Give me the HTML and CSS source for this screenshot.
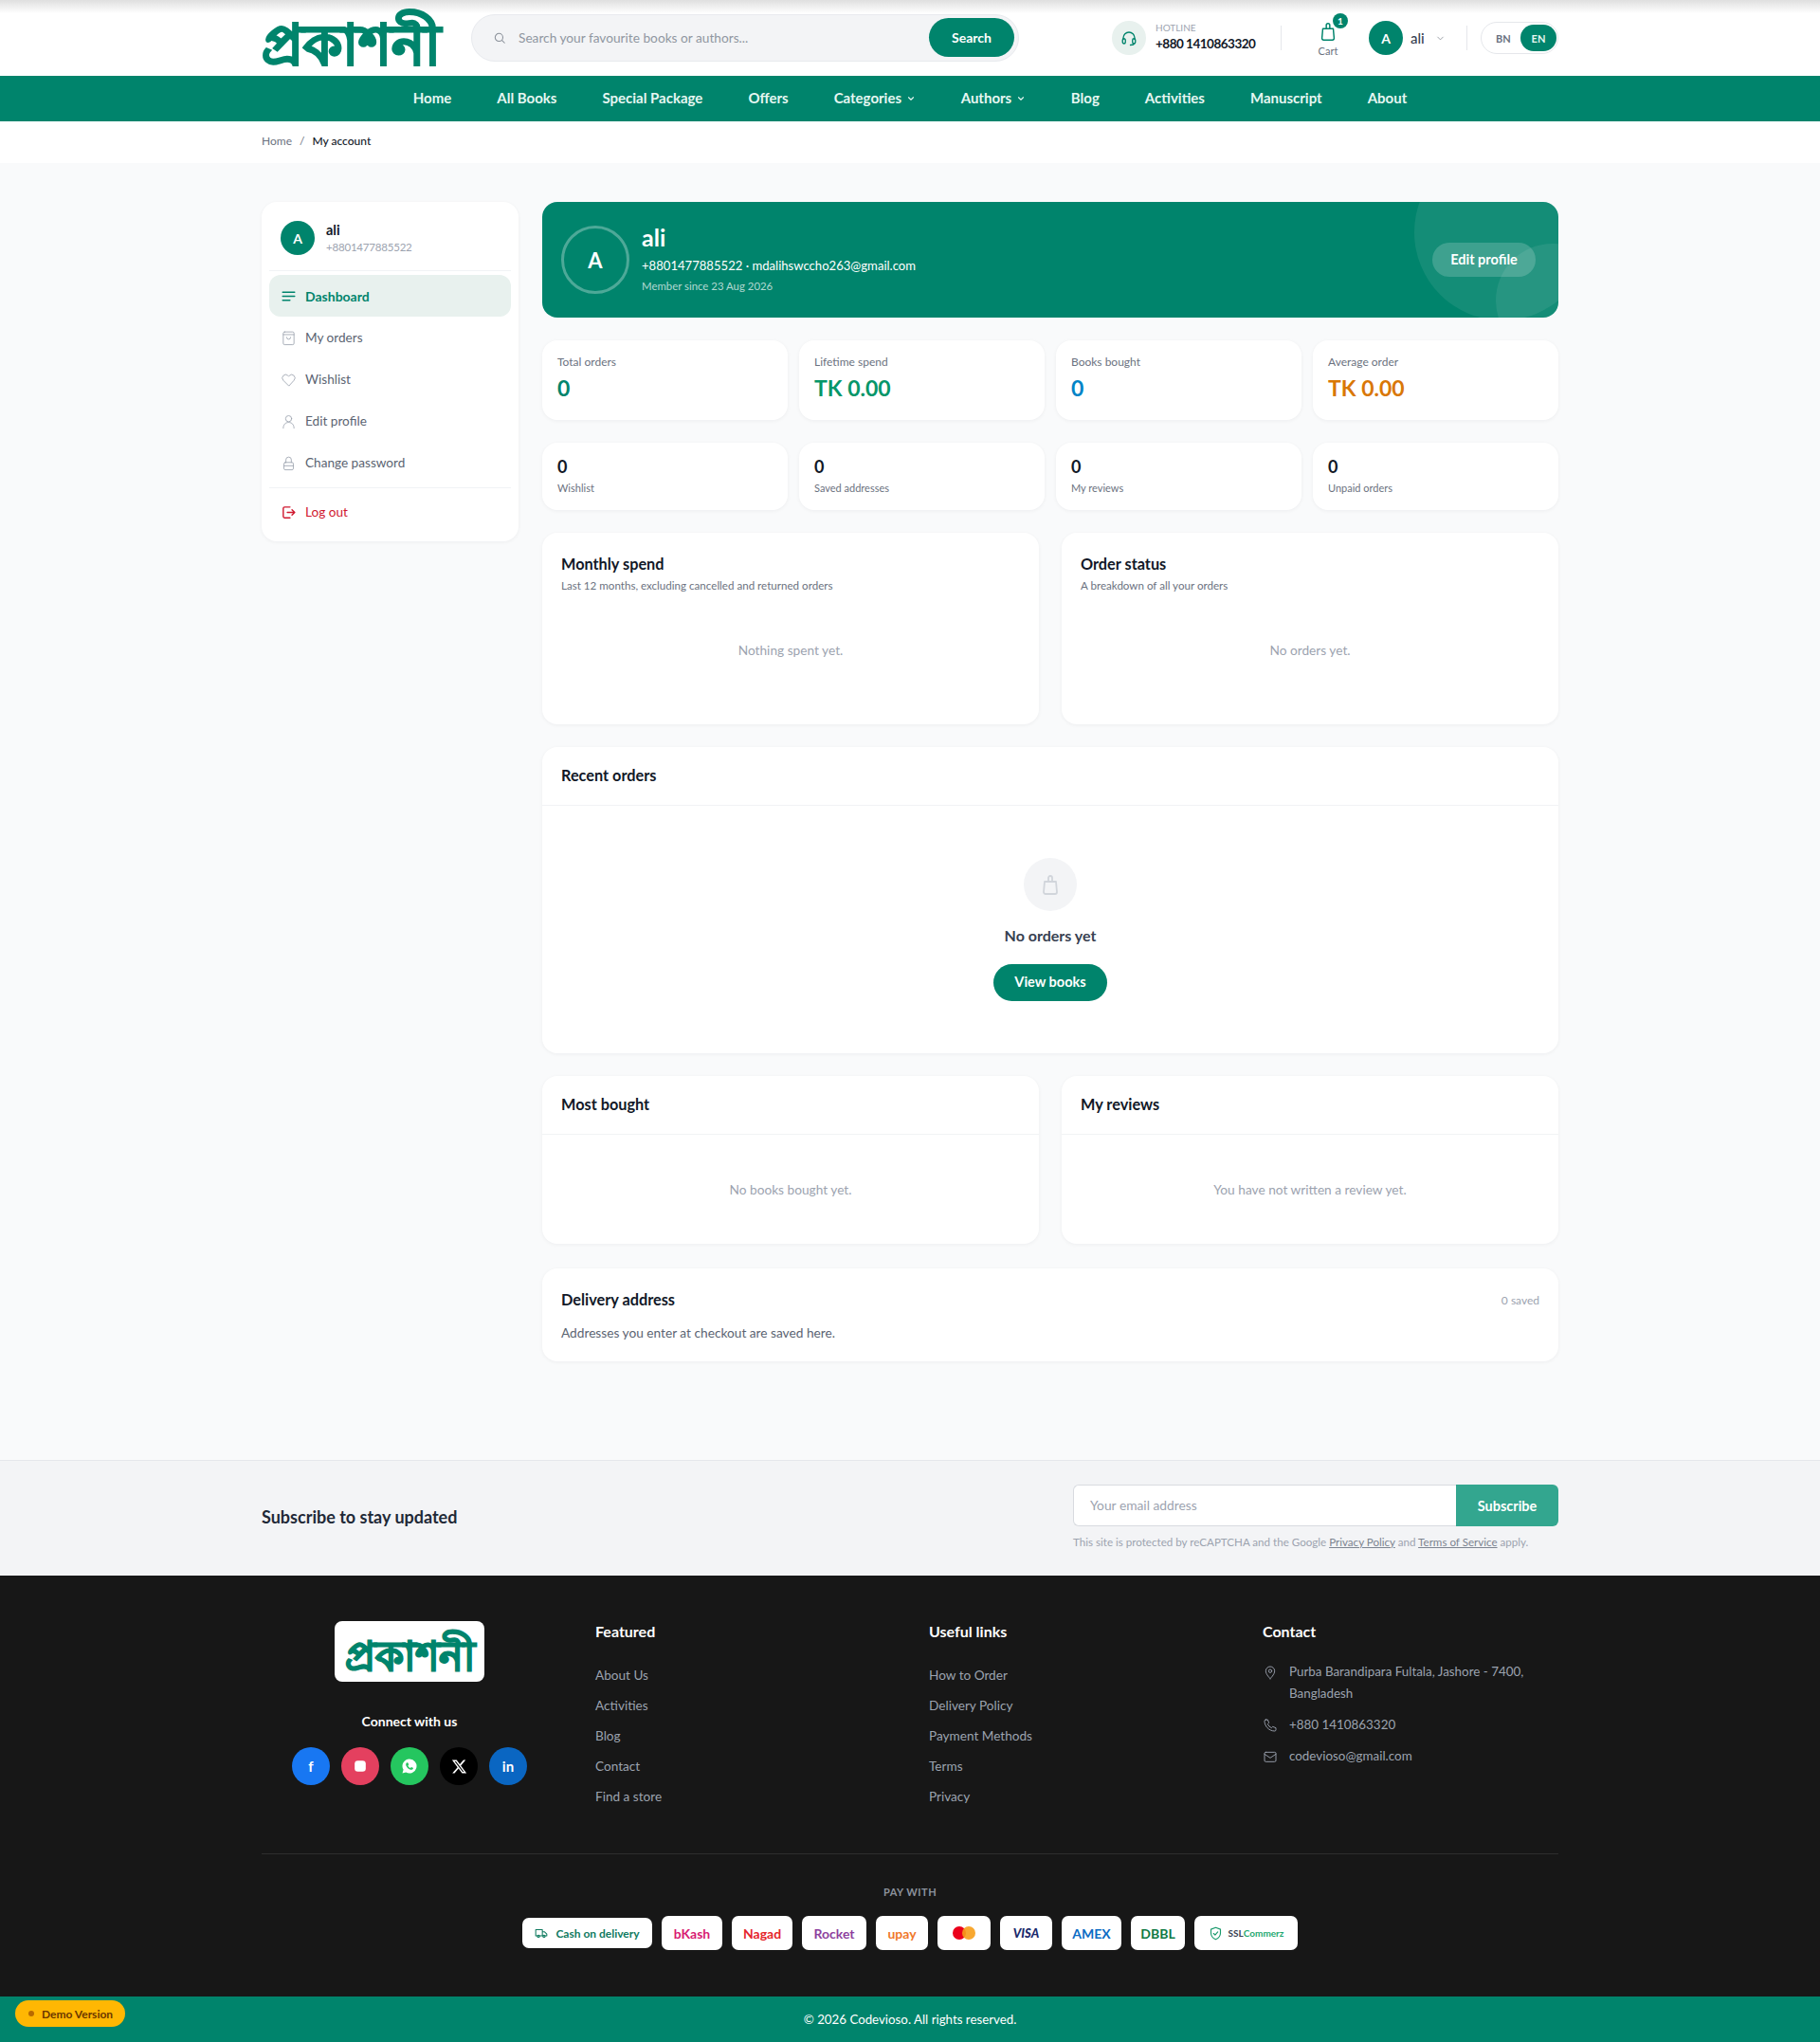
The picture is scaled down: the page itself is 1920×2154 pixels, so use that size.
FILE: index.html
```html
<!DOCTYPE html>
<html lang="en">
<head>
    <meta charset="UTF-8">
    <meta name="viewport" content="width=device-width, initial-scale=1.0">
    <title>My account</title>
    <link rel="stylesheet" href="styles.css">
</head>
<body>
    <header class="site-header">
        <div class="container header-row">
            <a class="logo" href="#" lang="bn">প্রকাশনী</a>
            <form class="search">
                <svg class="search-icon" viewBox="0 0 24 24"><circle cx="11" cy="11" r="7"/><path d="M16.5 16.5 21 21"/></svg>
                <span class="search-text">Search your favourite books or authors...</span>
                <button type="button" class="search-btn">Search</button>
            </form>
            <div class="hotline">
                <span class="hotline-icon">
                    <svg viewBox="0 0 24 24"><path d="M4 14v-2a8 8 0 0 1 16 0v2"/><rect x="3" y="13" width="4" height="7" rx="2"/><rect x="17" y="13" width="4" height="7" rx="2"/><path d="M19 20c0 1.5-2 2-5 2"/></svg>
                </span>
                <div>
                    <div class="hotline-label">HOTLINE</div>
                    <div class="hotline-number">+880 1410863320</div>
                </div>
            </div>
            <span class="v-line"></span>
            <a class="cart" href="#">
                <svg viewBox="0 0 24 24"><path d="M6 9h12l1 11a2 2 0 0 1-2 2H7a2 2 0 0 1-2-2z"/><path d="M10 9V5a2 2 0 0 1 4 0v4"/></svg>
                <span class="cart-badge">1</span>
                <span class="cart-label">Cart</span>
            </a>
            <div class="user-menu">
                <span class="avatar">A</span>
                <span class="user-name">ali</span>
                <svg class="chev" viewBox="0 0 24 24"><path d="m6 9 6 6 6-6"/></svg>
            </div>
            <span class="v-line"></span>
            <div class="lang">
                <span class="lang-opt">BN</span>
                <span class="lang-opt lang-on">EN</span>
            </div>
        </div>
    </header>

    <nav class="main-nav">
        <a href="#">Home</a>
        <a href="#">All Books</a>
        <a href="#">Special Package</a>
        <a href="#">Offers</a>
        <a href="#">Categories <svg viewBox="0 0 24 24"><path d="m6 9 6 6 6-6"/></svg></a>
        <a href="#">Authors <svg viewBox="0 0 24 24"><path d="m6 9 6 6 6-6"/></svg></a>
        <a href="#">Blog</a>
        <a href="#">Activities</a>
        <a href="#">Manuscript</a>
        <a href="#">About</a>
    </nav>

    <div class="crumbs">
        <div class="container"><a href="#">Home</a><span class="crumb-sep">/</span><b>My account</b></div>
    </div>

    <main class="container account">
        <aside class="side-card">
            <div class="side-user">
                <span class="avatar">A</span>
                <div>
                    <div class="side-name">ali</div>
                    <div class="side-phone">+8801477885522</div>
                </div>
            </div>
            <a class="side-link active" href="#">
                <svg viewBox="0 0 24 24"><path d="M3 6h18M3 12h18M3 18h11"/></svg>Dashboard
            </a>
            <a class="side-link" href="#">
                <svg viewBox="0 0 24 24"><rect x="4" y="3" width="16" height="19" rx="2"/><path d="M4 7h16M9 11a3 3 0 0 0 6 0"/></svg>My orders
            </a>
            <a class="side-link" href="#">
                <svg viewBox="0 0 24 24"><path d="M12 21 4 13a5 5 0 0 1 0-7 5 5 0 0 1 7 0l1 1 1-1a5 5 0 0 1 7 0 5 5 0 0 1 0 7z"/></svg>Wishlist
            </a>
            <a class="side-link" href="#">
                <svg viewBox="0 0 24 24"><circle cx="12" cy="8" r="4.5"/><path d="M4 22c0-5 3-8.5 8-8.5s8 3.5 8 8.5"/></svg>Edit profile
            </a>
            <a class="side-link" href="#">
                <svg viewBox="0 0 24 24"><rect x="5" y="11" width="14" height="11" rx="2"/><path d="M8 11V7a4 4 0 0 1 8 0v4M5 16h14"/></svg>Change password
            </a>
            <a class="side-link logout" href="#">
                <svg viewBox="0 0 24 24"><path d="M14 4H6a2 2 0 0 0-2 2v12a2 2 0 0 0 2 2h8"/><path d="M10 12h11M17 8l4 4-4 4"/></svg>Log out
            </a>
        </aside>

        <div class="dash">
            <section class="hero">
                <span class="hero-circle hero-circle-a"></span>
                <span class="hero-circle hero-circle-b"></span>
                <span class="hero-avatar">A</span>
                <div class="hero-info">
                    <h1>ali</h1>
                    <div class="hero-contact">+8801477885522 · mdalihswccho263@gmail.com</div>
                    <div class="hero-since">Member since 23 Aug 2026</div>
                </div>
                <a class="hero-btn" href="#">Edit profile</a>
            </section>

            <section class="stat-grid">
                <div class="card stat"><div class="stat-label">Total orders</div><div class="stat-value green">0</div></div>
                <div class="card stat"><div class="stat-label">Lifetime spend</div><div class="stat-value green2">TK 0.00</div></div>
                <div class="card stat"><div class="stat-label">Books bought</div><div class="stat-value blue">0</div></div>
                <div class="card stat"><div class="stat-label">Average order</div><div class="stat-value orange">TK 0.00</div></div>
            </section>

            <section class="stat-grid">
                <div class="card mini"><div class="mini-value">0</div><div class="mini-label">Wishlist</div></div>
                <div class="card mini"><div class="mini-value">0</div><div class="mini-label">Saved addresses</div></div>
                <div class="card mini"><div class="mini-value">0</div><div class="mini-label">My reviews</div></div>
                <div class="card mini"><div class="mini-value">0</div><div class="mini-label">Unpaid orders</div></div>
            </section>

            <section class="two-col">
                <div class="card chart">
                    <h3>Monthly spend</h3>
                    <p class="chart-sub">Last 12 months, excluding cancelled and returned orders</p>
                    <p class="muted chart-empty">Nothing spent yet.</p>
                </div>
                <div class="card chart">
                    <h3>Order status</h3>
                    <p class="chart-sub">A breakdown of all your orders</p>
                    <p class="muted chart-empty">No orders yet.</p>
                </div>
            </section>

            <section class="card recent">
                <h3 class="card-head">Recent orders</h3>
                <div class="empty">
                    <span class="empty-icon">
                        <svg viewBox="0 0 24 24"><path d="M6 9h12l1 11a2 2 0 0 1-2 2H7a2 2 0 0 1-2-2z"/><path d="M10 9V5a2 2 0 0 1 4 0v4"/></svg>
                    </span>
                    <div class="empty-title">No orders yet</div>
                    <a class="pill-btn" href="#">View books</a>
                </div>
            </section>

            <section class="two-col">
                <div class="card small-panel">
                    <h3 class="card-head">Most bought</h3>
                    <p class="muted small-empty">No books bought yet.</p>
                </div>
                <div class="card small-panel">
                    <h3 class="card-head">My reviews</h3>
                    <p class="muted small-empty">You have not written a review yet.</p>
                </div>
            </section>

            <section class="card delivery">
                <div class="delivery-top">
                    <h3>Delivery address</h3>
                    <span class="saved">0 saved</span>
                </div>
                <p>Addresses you enter at checkout are saved here.</p>
            </section>
        </div>
    </main>

    <section class="newsletter">
        <div class="container news-row">
            <h2>Subscribe to stay updated</h2>
            <div class="news-form">
                <div class="news-fields">
                    <span class="news-input">Your email address</span>
                    <button type="button" class="news-btn">Subscribe</button>
                </div>
                <p class="news-note">This site is protected by reCAPTCHA and the Google <a href="#">Privacy Policy</a> and <a href="#">Terms of Service</a> apply.</p>
            </div>
        </div>
    </section>

    <footer class="footer">
        <div class="container">
            <div class="foot-cols">
                <div class="foot-brand">
                    <a class="foot-logo" href="#" lang="bn">প্রকাশনী</a>
                    <div class="connect">Connect with us</div>
                    <div class="socials">
                        <a class="soc fb" href="#">f</a>
                        <a class="soc ig" href="#"><svg viewBox="0 0 24 24"><rect x="5" y="5" width="14" height="14" rx="4" fill="#fff"/></svg></a>
                        <a class="soc wa" href="#"><svg viewBox="0 0 24 24"><path fill="#fff" d="M12 3a9 9 0 0 0-7.7 13.6L3 21l4.500-1.200A9 9 0 1 0 12 3z"/><path fill="#25c65f" d="M9 7.500c-.6 0-1.600.9-1.600 2.400 0 2.800 3.800 6.700 6.900 6.700 1.500 0 2.400-1.100 2.400-1.900 0-.4-2-1.500-2.400-1.400-.4.100-.8 1-1.200 1-.9 0-3-2-3-2.900 0-.4.800-.8.900-1.200.1-.4-.9-2.700-1.400-2.700z"/></svg></a>
                        <a class="soc xx" href="#"><svg viewBox="0 0 24 24"><path fill="#fff" d="M18.244 2.25h3.308l-7.227 8.26 8.502 11.24H16.17l-5.214-6.817L4.99 21.75H1.68l7.73-8.835L1.254 2.25H8.08l4.713 6.231zm-1.161 17.52h1.833L7.084 4.126H5.117z"/></svg></a>
                        <a class="soc li" href="#">in</a>
                    </div>
                </div>
                <div class="foot-col">
                    <h4>Featured</h4>
                    <a href="#">About Us</a>
                    <a href="#">Activities</a>
                    <a href="#">Blog</a>
                    <a href="#">Contact</a>
                    <a href="#">Find a store</a>
                </div>
                <div class="foot-col">
                    <h4>Useful links</h4>
                    <a href="#">How to Order</a>
                    <a href="#">Delivery Policy</a>
                    <a href="#">Payment Methods</a>
                    <a href="#">Terms</a>
                    <a href="#">Privacy</a>
                </div>
                <div class="foot-col foot-contact">
                    <h4>Contact</h4>
                    <div class="contact-row">
                        <svg viewBox="0 0 24 24"><path d="M12 22s7-6.500 7-12a7 7 0 0 0-14 0c0 5.500 7 12 7 12z"/><circle cx="12" cy="10" r="2.500"/></svg>
                        <span>Purba Barandipara Fultala, Jashore - 7400, Bangladesh</span>
                    </div>
                    <div class="contact-row">
                        <svg viewBox="0 0 24 24"><path d="M5 3h3l2 5-2 2a12 12 0 0 0 6 6l2-2 5 2v3a2 2 0 0 1-2 2C10 21 3 13 3 5a2 2 0 0 1 2-2z"/></svg>
                        <span>+880 1410863320</span>
                    </div>
                    <div class="contact-row">
                        <svg viewBox="0 0 24 24"><rect x="3" y="5" width="18" height="15" rx="2"/><path d="m3 8 9 6 9-6"/></svg>
                        <span>codevioso@gmail.com</span>
                    </div>
                </div>
            </div>

            <div class="pay">
                <div class="pay-title">PAY WITH</div>
                <div class="pay-row">
                    <span class="pay-item cod">
                        <svg viewBox="0 0 24 24"><path d="M2 6h12v11H2zM14 10h4l4 4v3h-8z"/><circle cx="7" cy="18" r="2"/><circle cx="17" cy="18" r="2"/></svg>Cash on delivery
                    </span>
                    <span class="pay-item w64 bkash">bKash</span>
                    <span class="pay-item w64 nagad">Nagad</span>
                    <span class="pay-item w68 rocket">Rocket</span>
                    <span class="pay-item w55 upay">upay</span>
                    <span class="pay-item w56"><i class="mc-a"></i><i class="mc-b"></i></span>
                    <span class="pay-item w55 visa">VISA</span>
                    <span class="pay-item w63 amex">AMEX</span>
                    <span class="pay-item w57 dbbl">DBBL</span>
                    <span class="pay-item ssl">
                        <svg viewBox="0 0 24 24"><path d="M12 2 4 5v6c0 5 3.500 9 8 11 4.500-2 8-6 8-11V5z"/><path d="m8.500 12 2.500 2.500 4.500-5"/></svg><span class="ssl-a">SSL</span><span class="ssl-b">Commerz</span>
                    </span>
                </div>
            </div>
        </div>
    </footer>

    <div class="copyright">© 2026 Codevioso. All rights reserved.</div>
    <div class="demo"><i></i>Demo Version</div>
</body>
</html>
```

FILE: styles.css
```css
* {
    box-sizing: border-box;
}
body {
    margin: 0;
    font-family: Lato, "Noto Sans", Arial, sans-serif;
    font-size: 14px;
    color: #111827;
    background-color: #f9fafb;
    position: relative;
}
a {
    color: inherit;
    text-decoration: none;
}
h1, h2, h3, h4, p {
    margin: 0;
}
svg {
    fill: none;
    stroke: currentColor;
    stroke-width: 1.8;
    stroke-linecap: round;
    stroke-linejoin: round;
}
.container {
    width: 1368px;
    margin: 0 auto;
}

/* header */
.site-header {
    height: 80px;
    background: linear-gradient(#dfdfdf, #fff 14px);
}
.header-row {
    display: flex;
    align-items: center;
    height: 80px;
}
.logo {
    width: 221px;
    height: 80px;
    line-height: 90px;
    color: #00846c;
    font-size: 59px;
    font-weight: 700;
    font-family: "Noto Sans", sans-serif;
    -webkit-text-stroke: 2px #00846c;
    white-space: nowrap;
}
.search {
    width: 578px;
    height: 50px;
    margin-top: -1px;
    display: flex;
    align-items: center;
    padding: 0 4px 0 22px;
    background-color: #f3f4f6;
    border: 1px solid #e8eaee;
    border-radius: 25px;
}
.search-icon {
    width: 14px;
    height: 14px;
    color: #8a9099;
    margin-right: 13px;
}
.search-text {
    flex: 1;
    color: #9097a1;
    font-size: 13.7px;
}
.search-btn {
    width: 90px;
    height: 41px;
    border: none;
    border-radius: 21px;
    background-color: #00846c;
    color: white;
    font: 700 14px Lato, sans-serif;
}
.hotline {
    display: flex;
    align-items: center;
    gap: 10px;
    margin-left: 98px;
    width: 178px;
}
.hotline-icon {
    width: 36px;
    height: 36px;
    border-radius: 50%;
    background-color: #e8f1ee;
    color: #00846c;
    display: flex;
    align-items: center;
    justify-content: center;
}
.hotline-icon svg {
    width: 18px;
    height: 18px;
}
.hotline-label {
    font-size: 10px;
    line-height: 12px;
    margin-bottom: 2px;
    color: #9ca3af;
}
.hotline-number {
    font-size: 13.5px;
    line-height: 18px;
    padding-bottom: 2px;
    letter-spacing: -0.5px;
    font-weight: 700;
}
.v-line {
    width: 1px;
    height: 26px;
    background-color: #e5e7eb;
}
.cart {
    position: relative;
    width: 44px;
    margin-left: 27px;
    margin-right: 21px;
    height: 40px;
    text-align: center;
    color: #00846c;
}
.cart svg {
    display: block;
    width: 22px;
    height: 22px;
    margin: 2px auto 0;
    stroke-width: 1.6;
}
.cart-badge {
    position: absolute;
    top: -6px;
    left: 27px;
    width: 16px;
    height: 16px;
    border-radius: 50%;
    background-color: #00846c;
    color: white;
    font-size: 10px;
    font-weight: 700;
    line-height: 16px;
}
.cart-label {
    display: block;
    font-size: 11px;
    color: #6b7280;
    margin-top: 3px;
}
.user-menu {
    display: flex;
    align-items: center;
    width: 103px;
}
.avatar {
    flex: none;
    width: 36px;
    height: 36px;
    border-radius: 50%;
    background-color: #00846c;
    color: white;
    font-size: 14px;
    font-weight: 700;
    display: flex;
    align-items: center;
    justify-content: center;
}
.user-name {
    margin-left: 8px;
    font-size: 15px;
    font-weight: 500;
    color: #374151;
}
.chev {
    width: 11px;
    height: 11px;
    margin-left: 11px;
    color: #8a8f98;
}
.lang {
    display: flex;
    align-items: center;
    justify-content: space-between;
    width: 82px;
    height: 34px;
    margin-left: 14px;
    padding: 2px 1px;
    background-color: white;
    border: 1px solid #e5e7eb;
    border-radius: 17px;
}
.lang-opt {
    font-size: 11px;
    font-weight: 700;
    color: #6b7280;
    margin-left: 14px;
}
.lang-on {
    width: 38px;
    height: 28px;
    margin: 0;
    border-radius: 14px;
    background-color: #00846c;
    color: #e6f7f2;
    display: flex;
    align-items: center;
    justify-content: center;
}

/* nav */
.main-nav {
    height: 48px;
    padding-bottom: 2px;
    background-color: #00846c;
    display: flex;
    align-items: center;
    justify-content: center;
    gap: 48px;
}
.main-nav a {
    color: #e6f7f2;
    font-size: 15px;
    font-weight: 700;
}
.main-nav svg {
    width: 10px;
    height: 10px;
    margin-left: 1px;
    stroke-width: 2.6;
}

/* breadcrumb */
.crumbs {
    height: 44px;
    background-color: white;
    font-size: 12px;
    color: #6b7280;
    line-height: 42px;
}
.crumb-sep {
    margin: 0 8px;
}
.crumbs b {
    font-weight: 500;
    color: #111827;
}

/* account layout */
.account {
    display: flex;
    align-items: flex-start;
    gap: 25px;
    padding: 41px 0 104px;
}
.card {
    background-color: white;
    border-radius: 16px;
    box-shadow: 0 1px 4px rgba(17, 24, 39, 0.05);
}
.side-card {
    flex: none;
    width: 271px;
    height: 358px;
    padding: 20px 8px 0;
    background-color: white;
    border-radius: 16px;
    box-shadow: 0 1px 4px rgba(17, 24, 39, 0.05);
}
.side-user {
    display: flex;
    align-items: center;
    gap: 12px;
    padding: 0 12px 16px;
    border-bottom: 1px solid #f1f3f5;
    margin-bottom: 4px;
    box-sizing: content-box;
    height: 36px;
}
.side-name {
    font-size: 14.5px;
    font-weight: 700;
    line-height: 18px;
}
.side-phone {
    font-size: 11.5px;
    line-height: 17px;
    letter-spacing: -0.2px;
    color: #9ca3af;
}
.side-link {
    display: flex;
    align-items: center;
    gap: 9px;
    height: 44px;
    padding-left: 12px;
    border-radius: 12px;
    font-size: 13.6px;
    color: #5b6472;
}
.side-link svg {
    width: 17px;
    height: 17px;
    stroke-width: 1.2;
    color: #9ca3af;
}
.side-link.active {
    background-color: #e8f1ee;
    color: #00846c;
    font-weight: 700;
    font-size: 14px;
}
.side-link.active svg {
    color: #00846c;
    stroke-width: 1.8;
}
.side-link.logout {
    margin-top: 8px;
    position: relative;
    color: #d0182f;
}
.side-link.logout::before {
    content: "";
    position: absolute;
    top: -4px;
    left: 0;
    right: 0;
    height: 1px;
    background-color: #f1f3f5;
}
.side-link.logout svg {
    color: #d0182f;
    stroke-width: 2;
}
.dash {
    width: 1072px;
    display: flex;
    flex-direction: column;
    gap: 24px;
}

/* hero */
.hero {
    position: relative;
    overflow: hidden;
    height: 122px;
    display: flex;
    align-items: center;
    padding: 0 24px 0 20px;
    border-radius: 16px;
    background-color: #00846c;
    color: white;
}
.hero-circle {
    position: absolute;
    border-radius: 50%;
    background-color: rgba(255, 255, 255, 0.08);
}
.hero-circle-a {
    width: 186px;
    height: 186px;
    right: -34px;
    top: -61px;
}
.hero-circle-b {
    width: 120px;
    height: 120px;
    right: -54px;
    bottom: -42px;
}
.hero-avatar {
    width: 72px;
    height: 72px;
    border: 3px solid rgba(255, 255, 255, 0.3);
    border-radius: 50%;
    font-size: 22px;
    font-weight: 700;
    display: flex;
    align-items: center;
    justify-content: center;
}
.hero-info {
    flex: 1;
    margin-left: 13px;
}
.hero-info h1 {
    font-size: 25px;
    line-height: 30px;
    font-weight: 700;
    margin-top: -2px;
}
.hero-contact {
    font-size: 13.1px;
    line-height: 22px;
    margin-top: 4px;
}
.hero-since {
    font-size: 11.4px;
    line-height: 18px;
    margin-top: 2px;
    color: rgba(255, 255, 255, 0.7);
}
.hero-btn {
    position: relative;
    width: 109px;
    height: 36px;
    line-height: 36px;
    text-align: center;
    border-radius: 18px;
    background-color: rgba(255, 255, 255, 0.18);
    font-size: 14.5px;
    font-weight: 700;
}

/* stats */
.stat-grid {
    display: grid;
    grid-template-columns: repeat(4, 1fr);
    gap: 12px;
}
.stat {
    height: 84px;
    padding: 14px 16px 0;
}
.stat-label {
    font-size: 12px;
    line-height: 18px;
    color: #6b7280;
}
.stat-value {
    font-size: 23px;
    line-height: 30px;
    font-weight: 700;
    margin-top: 3px;
}
.green {
    color: #00846c;
}
.green2 {
    color: #059669;
}
.blue {
    color: #0284c7;
}
.orange {
    color: #d97706;
}
.mini {
    height: 71px;
    padding: 15px 16px 0;
}
.mini-value {
    font-size: 18px;
    line-height: 20px;
    font-weight: 700;
}
.mini-label {
    font-size: 11px;
    line-height: 16px;
    margin-top: 5px;
    color: #6b7280;
}

/* panels */
.two-col {
    display: grid;
    grid-template-columns: 1fr 1fr;
    gap: 24px;
}
.card h3 {
    font-size: 16.3px;
    line-height: 22px;
    font-weight: 700;
}
.chart {
    height: 202px;
    padding: 22px 20px 0;
}
.chart-sub {
    font-size: 11.6px;
    line-height: 18px;
    margin-top: 3px;
    color: #6b7280;
}
.muted {
    color: #9ca3af;
    font-size: 13.7px;
    text-align: center;
}
.chart-empty {
    margin-top: 50px;
}
.recent {
    height: 323px;
}
.card .card-head {
    height: 62px;
    padding: 19px 20px 0;
    border-bottom: 1px solid #f1f3f5;
}
.empty {
    display: flex;
    flex-direction: column;
    align-items: center;
    padding-top: 55px;
}
.empty-icon {
    width: 56px;
    height: 56px;
    border-radius: 50%;
    background-color: #f3f4f6;
    color: #d1d5db;
    display: flex;
    align-items: center;
    justify-content: center;
}
.empty-icon svg {
    width: 24px;
    height: 24px;
}
.empty-title {
    margin-top: 15px;
    font-size: 16px;
    line-height: 22px;
    font-weight: 700;
    color: #374151;
}
.pill-btn {
    margin-top: 19px;
    width: 120px;
    height: 39px;
    line-height: 38px;
    text-align: center;
    border-radius: 20px;
    background-color: #00846c;
    color: white;
    font-weight: 700;
    font-size: 14.5px;
}
.small-panel {
    height: 177px;
}
.small-empty {
    margin-top: 49px;
}
.delivery {
    height: 98px;
    margin-top: 2px;
    padding: 22px 20px 0;
}
.delivery-top {
    display: flex;
    justify-content: space-between;
    align-items: center;
}
.saved {
    font-size: 12px;
    color: #9ca3af;
}
.delivery p {
    margin-top: 14px;
    font-size: 13.7px;
    line-height: 20px;
    color: #5b6472;
}

/* newsletter */
.newsletter {
    height: 122px;
    background-color: #f3f4f6;
    border-top: 1px solid #e5e7eb;
}
.news-row {
    display: flex;
    justify-content: space-between;
    padding-top: 25px;
}
.news-row h2 {
    margin-top: 22px;
    font-size: 18px;
    line-height: 24px;
    font-weight: 700;
    color: #1f2937;
}
.news-form {
    width: 512px;
}
.news-fields {
    display: flex;
    height: 44px;
}
.news-input {
    flex: 1;
    padding-left: 17px;
    line-height: 41px;
    font-size: 13.8px;
    color: #9ca3af;
    background-color: white;
    border: 1px solid #d8dbe0;
    border-right: none;
    border-radius: 6px 0 0 6px;
}
.news-btn {
    width: 108px;
    border: none;
    border-radius: 0 6px 6px 0;
    background-color: #33a68f;
    color: white;
    font: 700 14.5px Lato, sans-serif;
}
.news-note {
    margin-top: 8px;
    font-size: 11.6px;
    line-height: 18px;
    color: #9ca3af;
    white-space: nowrap;
}
.news-note a {
    text-decoration: underline;
    color: #7c8490;
}

/* footer */
.footer {
    height: 444px;
    background-color: #171717;
    color: #9ca3af;
    padding-top: 48px;
}
.foot-cols {
    display: grid;
    grid-template-columns: repeat(4, 312px);
    gap: 40px;
    height: 246px;
    border-bottom: 1px solid rgba(255, 255, 255, 0.1);
}
.foot-brand {
    display: flex;
    flex-direction: column;
    align-items: center;
}
.foot-logo {
    width: 158px;
    height: 64px;
    padding-top: 8px;
    border-radius: 8px;
    background-color: white;
    color: #00846c;
    font-size: 43px;
    font-weight: 700;
    font-family: "Noto Sans", sans-serif;
    -webkit-text-stroke: 1.5px #00846c;
    text-align: center;
    line-height: 56px;
    white-space: nowrap;
}
.connect {
    margin-top: 32px;
    font-size: 14px;
    line-height: 20px;
    font-weight: 700;
    color: white;
}
.socials {
    display: flex;
    gap: 12px;
    margin-top: 17px;
}
.soc {
    width: 40px;
    height: 40px;
    border-radius: 50%;
    display: flex;
    align-items: center;
    justify-content: center;
    color: white;
    font-weight: 700;
    font-size: 15px;
}
.soc svg {
    width: 20px;
    height: 20px;
    stroke: none;
}
.soc.xx svg {
    width: 17px;
    height: 17px;
}
.fb {
    background-color: #1877f2;
}
.ig {
    background-color: #e4405f;
}
.wa {
    background-color: #25c65f;
}
.xx {
    background-color: black;
}
.li {
    background-color: #0a66c2;
}
.foot-col h4 {
    font-size: 16px;
    line-height: 22px;
    font-weight: 700;
    color: white;
    margin-bottom: 22px;
}
.foot-col a {
    display: block;
    height: 32px;
    line-height: 26px;
    font-size: 13.6px;
}
.foot-contact h4 {
    margin-bottom: 20px;
}
.contact-row {
    display: flex;
    gap: 12px;
    margin-bottom: 10px;
    font-size: 13.4px;
    line-height: 23px;
}
.contact-row svg {
    flex: none;
    width: 16px;
    height: 16px;
    margin-top: 4px;
    stroke-width: 1.4;
}

/* payment badges */
.pay {
    text-align: center;
    padding-top: 31px;
}
.pay-title {
    font-size: 11px;
    line-height: 18px;
    font-weight: 700;
    letter-spacing: 0.5px;
    color: #8b929c;
}
.pay-row {
    display: flex;
    justify-content: center;
    align-items: center;
    gap: 10px;
    margin-top: 16px;
}
.pay-item {
    height: 36px;
    border-radius: 7px;
    background-color: white;
    display: flex;
    align-items: center;
    justify-content: center;
    font-size: 14px;
    font-weight: 700;
}
.w64 {
    width: 64px;
}
.w68 {
    width: 68px;
}
.w55 {
    width: 55px;
}
.w56 {
    width: 56px;
}
.w63 {
    width: 63px;
}
.w57 {
    width: 57px;
}
.cod {
    width: 137px;
    height: 32px;
    gap: 8px;
    font-size: 12px;
    color: #0f7a5f;
}
.cod svg {
    width: 14px;
    height: 14px;
}
.bkash {
    color: #d81b72;
}
.nagad {
    color: #e5252a;
}
.rocket {
    color: #8e3f9e;
}
.upay {
    color: #f0792b;
}
.visa {
    color: #1a2a6c;
    font-style: italic;
    font-weight: 900;
    font-size: 13px;
}
.amex {
    color: #0b6cc4;
}
.dbbl {
    color: #0f7a45;
}
.mc-a, .mc-b {
    width: 14px;
    height: 14px;
    border-radius: 50%;
}
.mc-a {
    background-color: #eb001b;
    margin-right: -4px;
}
.mc-b {
    background-color: #f79e1b;
    opacity: 0.9;
}
.ssl {
    width: 109px;
    font-size: 10px;
}
.ssl svg {
    width: 15px;
    height: 15px;
    margin-right: 6px;
    color: #1a9a6c;
}
.ssl-a {
    color: #374151;
}
.ssl-b {
    color: #1fa971;
}

/* bottom */
.copyright {
    height: 48px;
    line-height: 48px;
    background-color: #00846c;
    color: white;
    text-align: center;
    font-size: 13.3px;
}
.demo {
    position: absolute;
    left: 16px;
    bottom: 16px;
    width: 116px;
    height: 28px;
    display: flex;
    align-items: center;
    gap: 8px;
    padding-left: 14px;
    border-radius: 14px;
    background-color: #ffb703;
    color: #6b3800;
    font-size: 12px;
    font-weight: 700;
}
.demo i {
    width: 6px;
    height: 6px;
    border-radius: 50%;
    background-color: #b86a00;
}
```
